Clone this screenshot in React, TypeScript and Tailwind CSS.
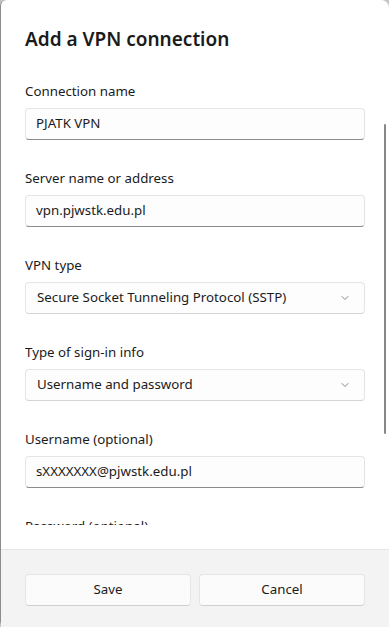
import { ChevronDown } from 'lucide-react'

const font = "font-['Segoe_UI','Noto_Sans','Open_Sans',sans-serif]"

function Label({ text }: { text: string }) {
  return <div className="text-[13.3px] leading-[20px] text-[#1b1b1b] mb-[7px]">{text}</div>
}

function TextBox({ value }: { value: string }) {
  return (
    <div className="h-[32px] rounded-[4px] border border-[#e5e5e5] border-b-[#8a8a8a] bg-[#fdfdfd] flex items-center pl-[10px] text-[13.3px] text-[#1b1b1b]">
      {value}
    </div>
  )
}

function ComboBox({ value }: { value: string }) {
  return (
    <div className="h-[32px] rounded-[4px] border border-[#e5e5e5] border-b-[#d4d4d4] bg-[#fdfdfd] flex items-center justify-between pl-[11px] pr-[13px] text-[13.3px] text-[#1b1b1b]">
      <span>{value}</span>
      <ChevronDown size={12} strokeWidth={1.5} className="text-[#5f5f5f]" />
    </div>
  )
}

function Field({ label, children }: { label: string; children: React.ReactNode }) {
  return (
    <div className="mb-[28px]">
      <Label text={label} />
      {children}
    </div>
  )
}

export default function App() {
  return (
    <div className={`w-[389px] h-[627px] bg-[#c4c4c4] overflow-hidden ${font}`}>
      <div className="relative w-full h-full bg-white rounded-tr-[8px] rounded-l-[6px] border-l border-[#8c8c8c] flex flex-col">
        <div className="flex-1 flex flex-col pl-[24px] pr-[24px] pt-[25px] pb-[24px] min-h-0">
          <h1 className="text-[19px] leading-[28px] font-semibold text-[#1b1b1b] mb-[28px]">Add a VPN connection</h1>
          <div className="flex-1 overflow-hidden min-h-0">
            <Field label="Connection name">
              <TextBox value="PJATK VPN" />
            </Field>
            <Field label="Server name or address">
              <TextBox value="vpn.pjwstk.edu.pl" />
            </Field>
            <Field label="VPN type">
              <ComboBox value="Secure Socket Tunneling Protocol (SSTP)" />
            </Field>
            <Field label="Type of sign-in info">
              <ComboBox value="Username and password" />
            </Field>
            <Field label="Username (optional)">
              <TextBox value="sXXXXXXX@pjwstk.edu.pl" />
            </Field>
            <Field label="Password (optional)">
              <TextBox value="" />
            </Field>
          </div>
        </div>
        {/* scrollbar thumb */}
        <div className="absolute right-[3px] top-[124px] w-[2px] h-[310px] rounded-full bg-[#878787]" />
        <div className="h-[78px] shrink-0 bg-[#f3f3f3] border-t border-[#e5e5e5] flex gap-[8px] pl-[24px] pr-[24px] pt-[24px]">
          <button className="flex-1 h-[32px] rounded-[4px] bg-[#fbfbfb] border border-[#e5e5e5] border-b-[#cfcfcf] text-[13.3px] text-[#1b1b1b]">Save</button>
          <button className="flex-1 h-[32px] rounded-[4px] bg-[#fbfbfb] border border-[#e5e5e5] border-b-[#cfcfcf] text-[13.3px] text-[#1b1b1b]">Cancel</button>
        </div>
      </div>
    </div>
  )
}
